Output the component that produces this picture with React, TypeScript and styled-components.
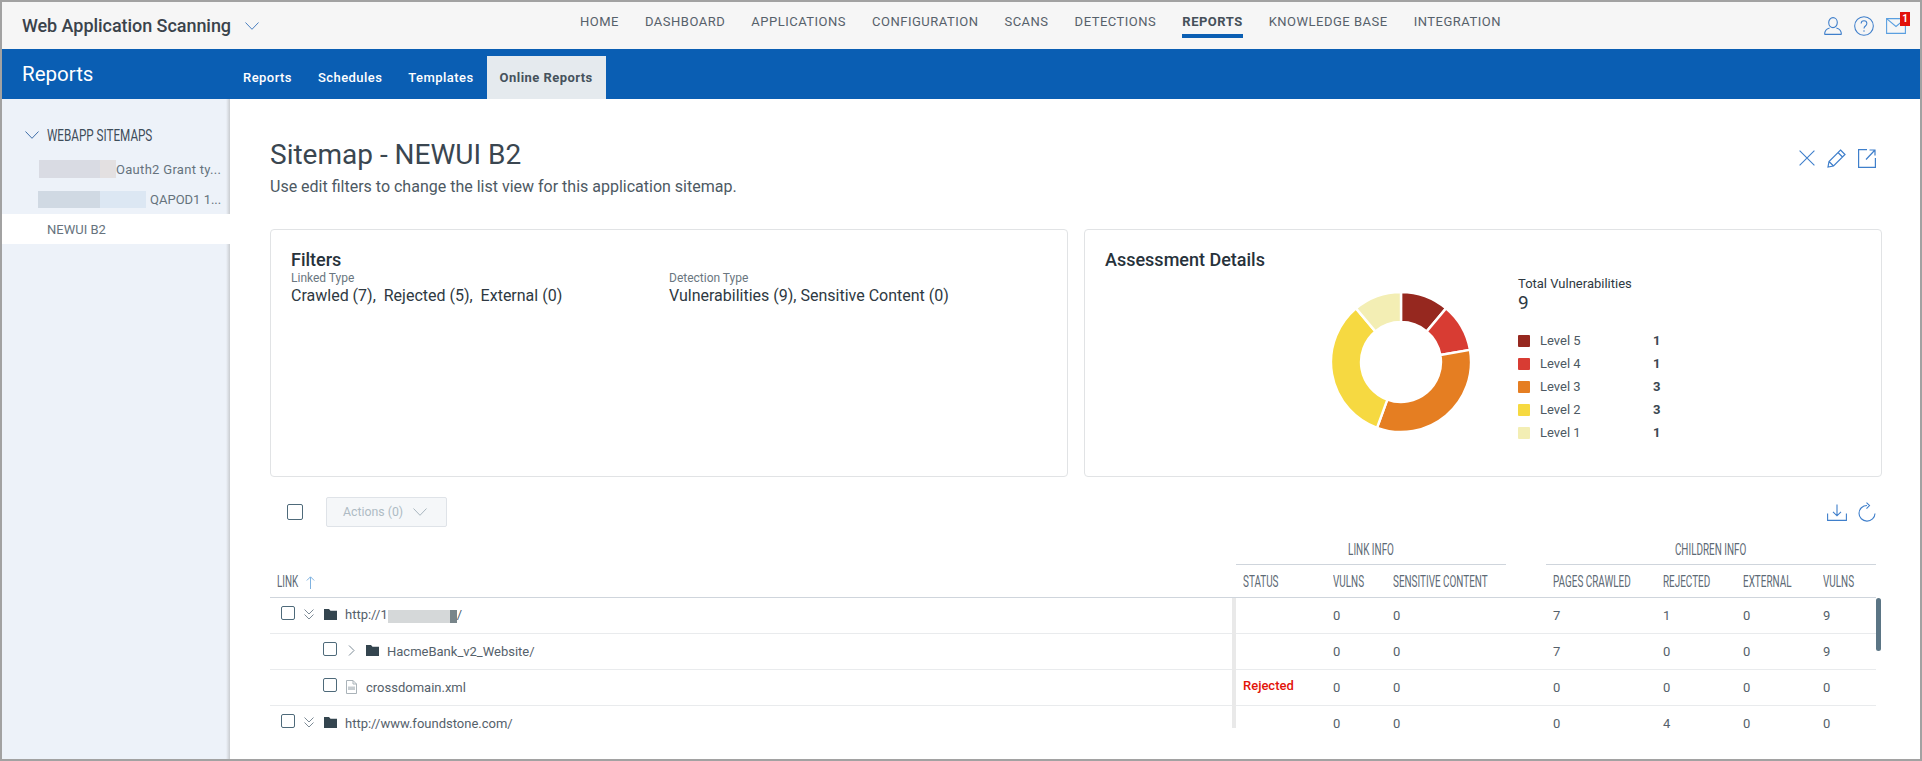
import styled, { createGlobalStyle } from 'styled-components';

const GlobalStyle = createGlobalStyle`
  html, body {
    margin: 0;
    padding: 0;
    background: #fff;
    font-family: Roboto, "Liberation Sans", sans-serif;
    color: #3c4a55;
  }
`;

const NAV = ['HOME', 'DASHBOARD', 'APPLICATIONS', 'CONFIGURATION', 'SCANS', 'DETECTIONS', 'REPORTS', 'KNOWLEDGE BASE', 'INTEGRATION'];
const TABS = ['Reports', 'Schedules', 'Templates', 'Online Reports'];
const LEVELS = [
  { name: 'Level 5', count: 1, color: '#96281f' },
  { name: 'Level 4', count: 1, color: '#d83c33' },
  { name: 'Level 3', count: 3, color: '#e57e22' },
  { name: 'Level 2', count: 3, color: '#f6d941' },
  { name: 'Level 1', count: 1, color: '#f3eeb4' },
];
const COLUMNS = '966px 90px 60px 120px 40px 110px 80px 80px 60px';

const sector = (from: number, to: number) => {
  const R = 70;
  const r = 40;
  const pt = (rad: number, a: number) => {
    const t = (a / 9) * Math.PI * 2 - Math.PI / 2;
    return `${(71 + rad * Math.cos(t)).toFixed(2)} ${(71 + rad * Math.sin(t)).toFixed(2)}`;
  };
  const large = to - from > 4.5 ? 1 : 0;
  return `M${pt(R, from)} A${R} ${R} 0 ${large} 1 ${pt(R, to)} L${pt(r, to)} A${r} ${r} 0 ${large} 0 ${pt(r, from)} Z`;
};

const Donut = () => {
  let at = 0;
  return (
    <ChartSvg viewBox="0 0 142 142">
      {LEVELS.map((l) => {
        const d = sector(at, at + l.count);
        at += l.count;
        return <path key={l.name} d={d} fill={l.color} stroke="#fff" strokeWidth="2.4" />;
      })}
    </ChartSvg>
  );
};

const Chevron = ({ w = 14, h = 8, color = '#4a7fc0' }: { w?: number; h?: number; color?: string }) => (
  <svg width={w} height={h} viewBox="0 0 14 8" fill="none" preserveAspectRatio="none">
    <path d="M.5.5 7 7.3 13.5.5" stroke={color} strokeWidth="1" />
  </svg>
);

const DoubleChevron = () => (
  <TreeIcon width="10" height="11" viewBox="0 0 10 11" fill="none">
    <path d="M.5.5 5 5l4.5-4.5M.5 5.5 5 10l4.5-4.5" stroke="#7d8b96" strokeWidth="1" />
  </TreeIcon>
);

const RightChevron = () => (
  <TreeIcon width="10" height="11" viewBox="0 0 10 11" fill="none">
    <path d="M3 .5 8 5.5 3 10.5" stroke="#7d8b96" strokeWidth="1" />
  </TreeIcon>
);

const Folder = () => (
  <FolderSvg width="13" height="11" viewBox="0 0 13 11">
    <path d="M0 0h5l1.5 1.8H13V11H0z" fill="#34454f" />
  </FolderSvg>
);

const FileIcon = () => (
  <FileSvg width="11" height="14" viewBox="0 0 11 14" fill="none">
    <path d="M.5.5h6.5l3.500 3.500v9.500H.5z" stroke="#aab3b9" />
    <path d="M7 .5V4h3.500" stroke="#aab3b9" />
    <path d="M2 6.500h7v3.500H2z" fill="#c7cdd1" />
  </FileSvg>
);

const Row = ({
  depth,
  kind,
  label,
  status,
  values,
}: {
  depth: number;
  kind: 'open' | 'closed' | 'file';
  label: React.ReactNode;
  status?: string;
  values: number[];
}) => (
  <GridRow>
    <LinkCell $depth={depth}>
      <SmallCheck />
      {kind === 'open' && <DoubleChevron />}
      {kind === 'closed' && <RightChevron />}
      {kind === 'file' ? <FileIcon /> : <Folder />}
      <span>{label}</span>
    </LinkCell>
    <Cell>{status && <Status>{status}</Status>}</Cell>
    <Cell>{values[0]}</Cell>
    <Cell>{values[1]}</Cell>
    <span />
    <Cell>{values[2]}</Cell>
    <Cell>{values[3]}</Cell>
    <Cell>{values[4]}</Cell>
    <Cell>{values[5]}</Cell>
  </GridRow>
);

export default function App() {
  return (
    <Frame>
      <GlobalStyle />
      <TopBar>
        <Brand>
          Web Application Scanning
          <Chevron />
        </Brand>
        <Nav>
          {NAV.map((n) => (
            <NavItem key={n} $active={n === 'REPORTS'}>
              {n}
            </NavItem>
          ))}
        </Nav>
        <TopIcons>
          <svg width="18" height="18" viewBox="0 0 18 18" fill="none" stroke="#3f7fcb" strokeWidth="1.1">
            <ellipse cx="9" cy="5.600" rx="4.300" ry="5" />
            <path d="M.6 17.400c0-3.600 2.800-5.800 5-6.400M17.400 17.400c0-3.600-2.800-5.800-5-6.400M.6 17.400h16.800" />
          </svg>
          <svg width="20" height="20" viewBox="0 0 21 21" fill="none" stroke="#3f7fcb" strokeWidth="1.1">
            <circle cx="10.500" cy="10.500" r="9.800" />
            <path d="M7.500 8c0-4 6-4 6 0 0 2.500-3 2.500-3 5" />
            <path d="M10.500 15v1.500" />
          </svg>
          <MailWrap>
            <svg width="20" height="16" viewBox="0 0 20 16" fill="none" stroke="#5a9fe0" strokeWidth="1.1">
              <path d="M.6.6h18.800v14.800H.6z" />
              <path d="M.6.6 10 8.500 19.400.6" />
            </svg>
            <Badge>1</Badge>
          </MailWrap>
        </TopIcons>
      </TopBar>

      <BlueBar>
        <BlueTitle>Reports</BlueTitle>
        <Tabs>
          {TABS.map((t) => (
            <Tab key={t} $active={t === 'Online Reports'}>
              {t}
            </Tab>
          ))}
        </Tabs>
      </BlueBar>

      <Columns>
        <Sidebar>
          <SideHeader>
            <Chevron color="#3f6ea8" />
            <SideHeaderText>WEBAPP SITEMAPS</SideHeaderText>
          </SideHeader>
          <SideItem $pad={37}>
            <Redact $w={61} $h={18} $color="#d9dbe3" />
            <Redact $w={16} $h={18} $color="#e3e0e1" />
            <span>Oauth2 Grant ty...</span>
          </SideItem>
          <SideItem $pad={36}>
            <Redact $w={62} $h={17} $color="#d0d9e3" />
            <Redact $w={46} $h={17} $color="#dce7f3" />
            <SideItemGap>QAPOD1 1...</SideItemGap>
          </SideItem>
          <SideSelected>NEWUI B2</SideSelected>
        </Sidebar>

        <Content>
          <TitleRow>
            <div>
              <PageTitle>Sitemap - NEWUI B2</PageTitle>
              <PageSub>Use edit filters to change the list view for this application sitemap.</PageSub>
            </div>
            <TitleIcons>
              <svg width="16" height="16" viewBox="0 0 16 16" fill="none" stroke="#3f7fcb" strokeWidth="1.1">
                <path d="M.6.6l14.800 14.800M15.400.6.600 15.400" />
              </svg>
              <svg width="19" height="19" viewBox="0 0 19 19" fill="none" stroke="#3f7fcb" strokeWidth="1.2">
                <path d="M13.500 1 18 5.500 6.500 17 1 18l1-5.500zM11 3.500 15.500 8M2 12.500 6.500 17" />
              </svg>
              <svg width="18" height="19" viewBox="0 0 18 19" fill="none" stroke="#3f7fcb" strokeWidth="1.2">
                <path d="M9 .6H.6v17.800h16.800V9M8 10.500 16.500 1.500M11.500 1h5.500v5.500" />
              </svg>
            </TitleIcons>
          </TitleRow>

          <Cards>
            <Card>
              <CardTitle>Filters</CardTitle>
              <FilterColumns>
                <div>
                  <FilterLabel>Linked Type</FilterLabel>
                  <FilterValue>Crawled (7),&nbsp; Rejected (5),&nbsp; External (0)</FilterValue>
                </div>
                <div>
                  <FilterLabel>Detection Type</FilterLabel>
                  <FilterValue>Vulnerabilities (9), Sensitive Content (0)</FilterValue>
                </div>
              </FilterColumns>
            </Card>
            <Card>
              <CardTitle>Assessment Details</CardTitle>
              <Assessment>
                <Donut />
                <Legend>
                  <TotalLabel>Total Vulnerabilities</TotalLabel>
                  <TotalValue>9</TotalValue>
                  <LegendRows>
                    {LEVELS.map((l) => (
                      <LegendRow key={l.name}>
                        <Swatch $color={l.color} />
                        <span>{l.name}</span>
                        <LegendCount>{l.count}</LegendCount>
                      </LegendRow>
                    ))}
                  </LegendRows>
                </Legend>
              </Assessment>
            </Card>
          </Cards>

          <TableArea>
            <Toolbar>
              <BigCheck />
              <ActionsButton>
                Actions (0)
                <Chevron color="#a9b6bf" />
              </ActionsButton>
              <ToolbarIcons>
                <svg width="20" height="17" viewBox="0 0 20 17" fill="none" stroke="#3f7fcb" strokeWidth="1.1">
                  <path d="M.6 9.500v6.900h18.800V9.500M10 .5v11M6 7.800l4 4 4-4" />
                </svg>
                <svg width="18" height="20" viewBox="0 0 18 20" fill="none" stroke="#3f7fcb" strokeWidth="1.1">
                  <path d="M9 3.500a8 7.800 0 1 0 8 8M8.500.6l3 3-3 3" />
                </svg>
              </ToolbarIcons>
            </Toolbar>

            <GroupRow>
              <GroupHead $from={2} $to={5}>
                <Narrow $center>LINK INFO</Narrow>
              </GroupHead>
              <GroupHead $from={6} $to={10}>
                <Narrow $center>CHILDREN INFO</Narrow>
              </GroupHead>
            </GroupRow>
            <HeadRow>
              <HeadCell>
                <Narrow>LINK</Narrow>
                <SortArrow width="9" height="13" viewBox="0 0 9 13" fill="none" stroke="#7fb2e0">
                  <path d="M4.500 13V1M.8 4.500 4.500.8l3.700 3.700" />
                </SortArrow>
              </HeadCell>
              <HeadCell><Narrow>STATUS</Narrow></HeadCell>
              <HeadCell><Narrow>VULNS</Narrow></HeadCell>
              <HeadCell><Narrow>SENSITIVE CONTENT</Narrow></HeadCell>
              <span />
              <HeadCell><Narrow>PAGES CRAWLED</Narrow></HeadCell>
              <HeadCell><Narrow>REJECTED</Narrow></HeadCell>
              <HeadCell><Narrow>EXTERNAL</Narrow></HeadCell>
              <HeadCell><Narrow>VULNS</Narrow></HeadCell>
            </HeadRow>
            <BodyWrap>
              <Rows>
                <Row
                  depth={0}
                  kind="open"
                  label={
                    <>
                      http://1
                      <Redact $w={62} $h={13} $color="#d5d8d9" />
                      <Redact $w={7} $h={13} $color="#78858a" />/
                    </>
                  }
                  values={[0, 0, 7, 1, 0, 9]}
                />
                <Row depth={1} kind="closed" label="HacmeBank_v2_Website/" values={[0, 0, 7, 0, 0, 9]} />
                <Row depth={1} kind="file" label="crossdomain.xml" status="Rejected" values={[0, 0, 0, 0, 0, 0]} />
                <Row depth={0} kind="open" label="http://www.foundstone.com/" values={[0, 0, 0, 4, 0, 0]} />
              </Rows>
              <Divider />
              <ScrollThumb />
            </BodyWrap>
          </TableArea>
        </Content>
      </Columns>
    </Frame>
  );
}

const Frame = styled.div`
  width: 1922px;
  height: 761px;
  box-sizing: border-box;
  border: 2px solid #a2a2a2;
  display: flex;
  flex-direction: column;
  overflow: hidden;
`;

const TopBar = styled.header`
  height: 47px;
  flex: none;
  background: #f6f6f6;
  display: flex;
  align-items: flex-start;
`;

const Brand = styled.div`
  width: 578px;
  height: 47px;
  box-sizing: border-box;
  padding-left: 20px;
  display: flex;
  align-items: center;
  gap: 14px;
  font-size: 18px;
  font-weight: 500;
  letter-spacing: -0.05px;
  color: #3a434b;
`;

const Nav = styled.nav`
  display: flex;
  gap: 26px;
`;

const NavItem = styled.a<{ $active?: boolean }>`
  padding: 11px 0 4px;
  line-height: 17px;
  font-size: 13px;
  letter-spacing: 0.5px;
  font-weight: ${({ $active }) => ($active ? 700 : 400)};
  color: ${({ $active }) => ($active ? '#45505a' : '#56616b')};
  border-bottom: 4px solid ${({ $active }) => ($active ? '#0b5fb3' : 'transparent')};
`;

const TopIcons = styled.div`
  margin-left: auto;
  height: 47px;
  padding-right: 14px;
  box-sizing: border-box;
  display: flex;
  align-items: center;
  gap: 12px;
`;

const MailWrap = styled.div`
  position: relative;
  display: flex;
`;

const Badge = styled.span`
  position: absolute;
  top: -6px;
  right: -4px;
  width: 10px;
  height: 14px;
  background: #e2120a;
  color: #fff;
  font-size: 10px;
  font-weight: 700;
  line-height: 14px;
  text-align: center;
`;

const BlueBar = styled.div`
  height: 50px;
  flex: none;
  background: #0a5eb3;
  display: flex;
`;

const BlueTitle = styled.div`
  width: 228px;
  box-sizing: border-box;
  padding: 12px 0 0 20px;
  font-size: 20.5px;
  line-height: 27px;
  color: #fff;
`;

const Tabs = styled.div`
  display: flex;
  align-self: flex-end;
`;

const Tab = styled.a<{ $active?: boolean }>`
  height: 43px;
  padding: 0 13px;
  display: flex;
  align-items: center;
  font-size: 13px;
  font-weight: ${({ $active }) => ($active ? 700 : 500)};
  letter-spacing: 0.45px;
  color: ${({ $active }) => ($active ? '#46525c' : '#fff')};
  background: ${({ $active }) => ($active ? '#e5eaee' : 'transparent')};
`;

const Columns = styled.div`
  flex: 1;
  min-height: 0;
  display: flex;
`;

const Sidebar = styled.aside`
  width: 228px;
  flex: none;
  box-sizing: border-box;
  padding-top: 25px;
  background: linear-gradient(to right, #edf2f9 224px, #c9ccd0 228px);
`;

const SideHeader = styled.div`
  height: 22px;
  margin-bottom: 8px;
  padding-left: 23px;
  display: flex;
  align-items: center;
  gap: 8px;
`;

const SideHeaderText = styled.span`
  display: inline-block;
  font-size: 16px;
  transform: scaleX(0.73);
  transform-origin: left center;
  white-space: nowrap;
  color: #3e4d5a;
`;

const SideItem = styled.div<{ $pad: number }>`
  height: 30px;
  padding-left: ${({ $pad }) => $pad}px;
  display: flex;
  align-items: center;
  font-size: 13px;
  letter-spacing: 0.3px;
  color: #66727d;
  white-space: nowrap;
`;

const SideItemGap = styled.span`
  margin-left: 4px;
  letter-spacing: 0;
`;

const SideSelected = styled.div`
  height: 30px;
  padding-left: 45px;
  display: flex;
  align-items: center;
  background: #fff;
  font-size: 13px;
  color: #66727d;
`;

const Redact = styled.span<{ $w: number; $h: number; $color: string }>`
  display: inline-block;
  vertical-align: middle;
  width: ${({ $w }) => $w}px;
  height: ${({ $h }) => $h}px;
  background: ${({ $color }) => $color};
`;

const Content = styled.main`
  flex: 1;
  min-width: 0;
  padding: 39px 38px 0 40px;
`;

const TitleRow = styled.div`
  display: flex;
  justify-content: space-between;
`;

const PageTitle = styled.h1`
  margin: 0;
  font-size: 28px;
  line-height: 34px;
  font-weight: 400;
  color: #3a4650;
`;

const PageSub = styled.p`
  margin: 5px 0 0;
  font-size: 16px;
  line-height: 20px;
  color: #4d5963;
`;

const TitleIcons = styled.div`
  display: flex;
  gap: 12px;
  align-items: center;
  height: 20px;
  margin: 10px 6px 0 0;
`;

const Cards = styled.div`
  margin-top: 32px;
  display: grid;
  grid-template-columns: 798px 798px;
  gap: 16px;
`;

const Card = styled.section`
  height: 248px;
  box-sizing: border-box;
  padding: 19px 20px;
  border: 1px solid #e1e3e5;
  border-radius: 4px;
`;

const CardTitle = styled.h2`
  margin: 0;
  font-size: 18px;
  line-height: 22px;
  font-weight: 500;
  color: #27323b;
`;

const FilterColumns = styled.div`
  display: grid;
  grid-template-columns: 378px 1fr;
`;

const FilterLabel = styled.div`
  font-size: 12px;
  line-height: 14px;
  color: #6a7680;
`;

const FilterValue = styled.div`
  margin-top: 1px;
  font-size: 16px;
  line-height: 20px;
  color: #2e3942;
`;

const Assessment = styled.div`
  display: flex;
  align-items: flex-start;
  padding-left: 225px;
  margin-top: 5px;
`;

const ChartSvg = styled.svg`
  width: 142px;
  height: 142px;
  flex: none;
  margin-top: 15px;
`;

const Legend = styled.div`
  margin-left: 46px;
`;

const TotalLabel = styled.div`
  font-size: 13px;
  line-height: 16px;
  color: #2e3942;
`;

const TotalValue = styled.div`
  font-size: 19px;
  line-height: 22px;
  color: #2e3942;
`;

const LegendRows = styled.div`
  margin-top: 15px;
`;

const LegendRow = styled.div`
  display: grid;
  grid-template-columns: 12px 103px auto;
  column-gap: 10px;
  align-items: center;
  height: 23px;
  font-size: 13px;
  color: #4d5963;
`;

const Swatch = styled.span<{ $color: string }>`
  width: 12px;
  height: 12px;
  border-radius: 1px;
  background: ${({ $color }) => $color};
`;

const LegendCount = styled.span`
  font-weight: 700;
  color: #3a4650;
`;

const TableArea = styled.div`
  width: 1606px;
  margin-top: 20px;
`;

const Toolbar = styled.div`
  height: 30px;
  padding-left: 17px;
  display: flex;
  align-items: center;
`;

const BigCheck = styled.span`
  width: 16px;
  height: 16px;
  box-sizing: border-box;
  border: 1.5px solid #4e6a7a;
  border-radius: 2px;
`;

const ActionsButton = styled.div`
  width: 121px;
  height: 30px;
  box-sizing: border-box;
  margin-left: 23px;
  padding-left: 16px;
  display: flex;
  align-items: center;
  gap: 10px;
  font-size: 12.3px;
  color: #aebbc4;
  background: #f5f7f9;
  border: 1px solid #dfe3e8;
  border-radius: 2px;
`;

const ToolbarIcons = styled.div`
  margin-left: auto;
  display: flex;
  align-items: center;
  gap: 11px;
`;

const GroupRow = styled.div`
  margin-top: 8px;
  height: 30px;
  display: grid;
  grid-template-columns: ${COLUMNS};
`;

const GroupHead = styled.div<{ $from: number; $to: number }>`
  grid-column: ${({ $from, $to }) => `${$from} / ${$to}`};
  display: flex;
  justify-content: center;
  align-items: center;
  border-bottom: 1px solid #cfd5dc;
`;

const Narrow = styled.span<{ $center?: boolean }>`
  display: inline-block;
  font-size: 16px;
  white-space: nowrap;
  color: #5d6a75;
  transform: scaleX(0.62);
  transform-origin: ${({ $center }) => ($center ? 'center' : 'left center')};
`;

const HeadRow = styled.div`
  height: 33px;
  box-sizing: border-box;
  display: grid;
  grid-template-columns: ${COLUMNS};
  border-bottom: 1px solid #cfd5dc;
`;

const HeadCell = styled.div`
  position: relative;
  display: flex;
  align-items: center;
  padding-left: 7px;
  white-space: nowrap;
`;

const SortArrow = styled.svg`
  position: absolute;
  left: 36px;
  top: 11px;
`;

const BodyWrap = styled.div`
  position: relative;
`;

const Rows = styled.div`
  height: 133px;
  overflow: hidden;
`;

const GridRow = styled.div`
  height: 36px;
  box-sizing: border-box;
  display: grid;
  grid-template-columns: ${COLUMNS};
  border-bottom: 1px solid #e9ebed;
`;

const Cell = styled.div`
  display: flex;
  align-items: center;
  padding-left: 7px;
  font-size: 13px;
  line-height: 13px;
  color: #55616b;
`;

const LinkCell = styled(Cell)<{ $depth: number }>`
  padding-left: ${({ $depth }) => ($depth ? 53 : 11)}px;
  white-space: nowrap;
`;

const SmallCheck = styled.span`
  width: 14px;
  height: 14px;
  flex: none;
  box-sizing: border-box;
  margin-bottom: 5px;
  border: 1.5px solid #4e6a7a;
  border-radius: 2px;
`;

const TreeIcon = styled.svg`
  flex: none;
  margin: 0 0 2px 9px;
`;

const FolderSvg = styled.svg`
  flex: none;
  margin: 0 8px 3px 10px;
`;

const FileSvg = styled.svg`
  flex: none;
  margin: 0 9px 2px 9px;
`;

const Status = styled.span`
  margin-bottom: 4px;
  color: #e2140a;
  font-weight: 500;
`;

const Divider = styled.span`
  position: absolute;
  left: 962px;
  top: 0;
  width: 4px;
  height: 130px;
  background: #e9e9e9;
`;

const ScrollThumb = styled.span`
  position: absolute;
  left: 100%;
  top: 0;
  width: 5px;
  height: 53px;
  border-radius: 3px;
  background: #5b7585;
`;
